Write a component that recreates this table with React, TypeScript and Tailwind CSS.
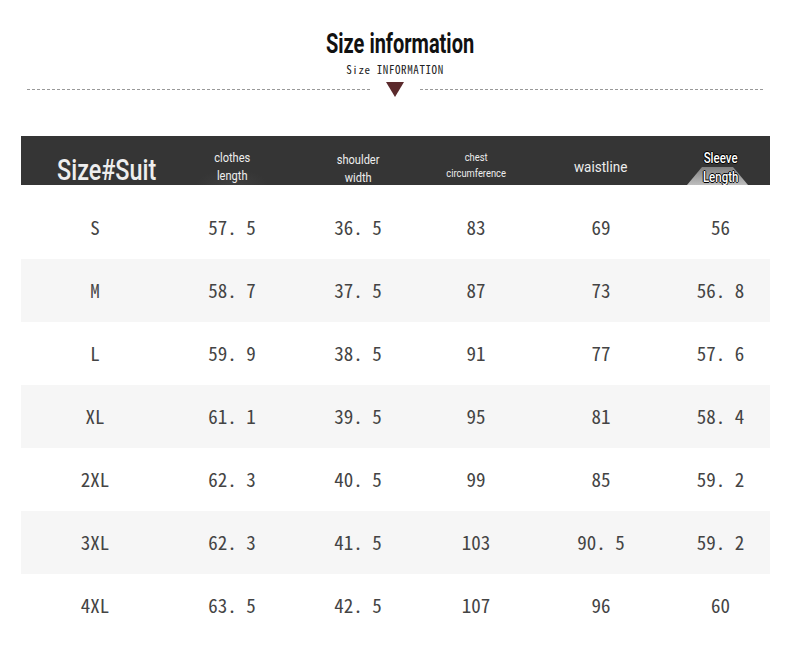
const cond = { fontFamily: "Roboto, 'Liberation Sans', sans-serif" } as const;
const mono = { fontFamily: "'Noto Sans Mono CJK SC', 'DejaVu Sans Mono', monospace" } as const;

const rows = [
  ["S", "57.5", "36.5", "83", "69", "56"],
  ["M", "58.7", "37.5", "87", "73", "56.8"],
  ["L", "59.9", "38.5", "91", "77", "57.6"],
  ["XL", "61.1", "39.5", "95", "81", "58.4"],
  ["2XL", "62.3", "40.5", "99", "85", "59.2"],
  ["3XL", "62.3", "41.5", "103", "90.5", "59.2"],
  ["4XL", "63.5", "42.5", "107", "96", "60"],
];

const cols = "grid grid-cols-[148px_126px_126px_110px_140px_99px]";

export default function App() {
  return (
    <div className="w-[790px] h-[647px] bg-white overflow-hidden">
      {/* Title block */}
      <div className="flex flex-col items-center pt-[28px]">
        <h1 className="ml-[10px] text-[27px] leading-[32px] font-bold text-[#111] scale-x-[0.74]" style={cond}>
          Size information
        </h1>
        <p className="mt-[3px] text-[11px] leading-[12px] text-[#222] tracking-[0.6px]" style={mono}>
          Size INFORMATION
        </p>
      </div>
      <div className="flex items-center mt-[7px] px-[27px]">
        <div className="flex-1 border-t border-dashed border-[#999]" />
        <div className="w-[50px] flex justify-center">
          <svg width="18" height="15" viewBox="0 0 18 15">
            <polygon points="0,0 18,0 9,15" fill="#5b2a2c" />
          </svg>
        </div>
        <div className="flex-1 border-t border-dashed border-[#999]" />
      </div>

      {/* Table */}
      <div className="mx-[21px] mt-[39px] w-[749px]">
        <div className={`${cols} grid-rows-[49px] bg-[#353535] text-[#eee] text-center overflow-hidden`} style={cond}>
          <div className="flex items-center justify-center pl-[23px]">
            <div className="text-[30px] leading-[30px] font-medium scale-x-[0.78] translate-y-[9px]">Size#Suit</div>
          </div>
          <div
            className="flex items-center justify-center"
            style={{ background: "radial-gradient(ellipse 36px 16px at 50% 100%, #3e3e3e 0%, #393939 60%, transparent 100%)" }}
          >
            <div className="text-[13px] leading-[18px] flex flex-col scale-x-[0.85] translate-y-[6px]">
              <span>clothes</span>
              <span>length</span>
            </div>
          </div>
          <div className="flex items-center justify-center">
            <div className="text-[13px] leading-[18px] flex flex-col scale-x-[0.85] translate-y-[8px]">
              <span>shoulder</span>
              <span>width</span>
            </div>
          </div>
          <div className="flex items-center justify-center">
            <div className="text-[11px] leading-[16px] flex flex-col scale-x-[0.85] translate-y-[5px]">
              <span>chest</span>
              <span>circumference</span>
            </div>
          </div>
          <div className="flex items-center justify-center">
            <div className="text-[15px] leading-[18px] scale-x-[0.9] translate-y-[6px]">waistline</div>
          </div>
          <div className="relative flex items-center justify-center">
            <svg className="absolute left-0 bottom-0" width="99" height="18" viewBox="0 0 99 18">
              <defs>
                <linearGradient id="tg" x1="0" y1="0" x2="0" y2="1">
                  <stop offset="0" stopColor="#7e7e7e" />
                  <stop offset="1" stopColor="#bdbdbd" />
                </linearGradient>
              </defs>
              <polygon points="16,18 77,18 62,0 31,0" fill="url(#tg)" />
            </svg>
            <div
              className="relative text-[14px] leading-[19px] text-white flex flex-col font-medium scale-x-[0.82] translate-y-[7px]"
              style={{ textShadow: "0 0 1px #000, 1px 0 0 #000, -1px 0 0 #000, 0 1px 0 #000, 0 -1px 0 #000" }}
            >
              <span>Sleeve</span>
              <span>Length</span>
            </div>
          </div>
        </div>

        <div className="mt-[11px]">
          {rows.map((r, i) => (
            <div
              key={r[0]}
              className={`${cols} h-[63px] items-center text-center text-[19px] text-[#444] ${i % 2 === 1 ? "bg-[#f6f6f6]" : ""}`}
              style={mono}
            >
              {r.map((c, j) => (
                <div key={j}>{c.replace(".", ". ")}</div>
              ))}
            </div>
          ))}
        </div>
      </div>
    </div>
  );
}
